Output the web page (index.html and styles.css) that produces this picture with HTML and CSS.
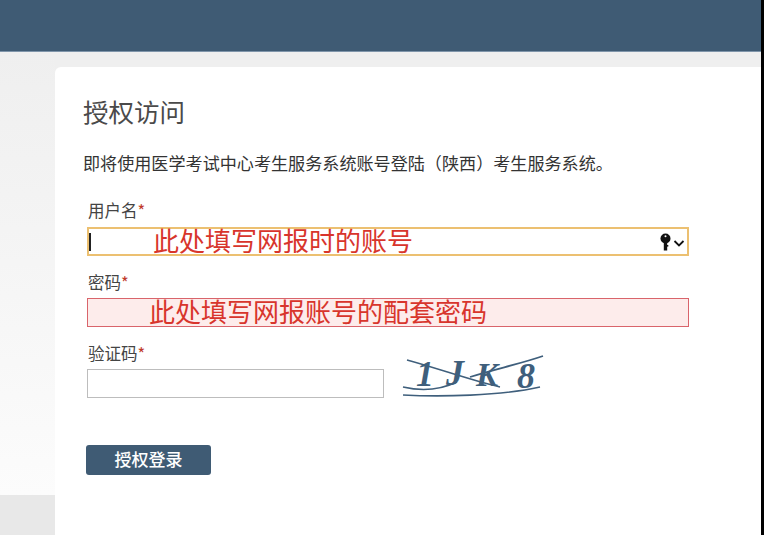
FILE: index.html
```html
<!DOCTYPE html>
<html lang="zh-CN">
<head>
    <meta charset="UTF-8">
    <title>授权访问</title>
    <link rel="stylesheet" href="styles.css">
</head>
<body>
    <div class="page">
        <div class="screen">
            <div class="topbar"></div>
            <div class="main">
                <div class="side">
                    <div class="side-top"></div>
                    <div class="side-bottom"></div>
                </div>
                <div class="card">
                    <h1 class="title">授权访问</h1>
                    <p class="desc">即将使用医学考试中心考生服务系统账号登陆（陕西）考生服务系统。</p>

                    <label class="label">用户名<span class="req">*</span></label>
                    <div class="field field-focus">
                        <span class="caret"></span>
                        <span class="hint hint-user">此处填写网报时的账号</span>
                        <svg class="key" width="26" height="18" viewBox="0 0 26 18">
                            <circle cx="5.5" cy="5.5" r="5" fill="#111"/>
                            <rect x="3.8" y="8" width="3.4" height="9.5" fill="#111"/>
                            <rect x="6.5" y="12" width="1.8" height="1.6" fill="#111"/>
                            <circle cx="5.5" cy="3.2" r="1" fill="#fff"/>
                            <path d="M14.5 8 L19 12.4 L23.5 8" fill="none" stroke="#111" stroke-width="1.8"/>
                        </svg>
                    </div>

                    <label class="label label-pass">密码<span class="req">*</span></label>
                    <div class="field field-error">
                        <span class="hint hint-pass">此处填写网报账号的配套密码</span>
                    </div>

                    <label class="label label-code">验证码<span class="req">*</span></label>
                    <div class="code-row">
                        <div class="field field-code"></div>
                        <svg class="captcha" width="146" height="48" viewBox="0 0 146 48">
                            <path d="M7 8 C40 17 70 28 100 35" fill="none" stroke="#3f5f7c" stroke-width="1.5"/>
                            <path d="M70 25 C95 17 120 12 143 4" fill="none" stroke="#3f5f7c" stroke-width="1.8"/>
                            <path d="M3 35 C20 39 40 38 57 30" fill="none" stroke="#3f5f7c" stroke-width="1.5"/>
                            <path d="M3 43 C40 45 100 44 140 35" fill="none" stroke="#3f5f7c" stroke-width="1.6"/>
                            <text class="captcha-text" x="16" y="34">1</text>
                            <text class="captcha-text" x="46" y="33">J</text>
                            <text class="captcha-text captcha-small" x="76" y="34">K</text>
                            <text class="captcha-text captcha-thin" x="117" y="36">8</text>
                        </svg>
                    </div>

                    <button class="btn">授权登录</button>
                </div>
            </div>
        </div>
        <div class="edge"></div>
    </div>
</body>
</html>
```

FILE: styles.css
```css
* {
    box-sizing: border-box;
}
body {
    margin: 0;
    font-family: "Noto Sans CJK SC", "Liberation Sans", sans-serif;
    color: #444;
    overflow: hidden;
}
.page {
    display: flex;
    height: 535px;
}
.screen {
    flex: 1;
    display: flex;
    flex-direction: column;
}
.edge {
    width: 3px;
    background-color: #000;
}
.topbar {
    height: 52px;
    background-color: #3f5b74;
    border-bottom: 1px solid #7f95aa;
}
.main {
    flex: 1;
    display: flex;
    background-color: #efefef;
}
.side {
    width: 55px;
    display: flex;
    flex-direction: column;
}
.side-top {
    height: 443px;
    background: linear-gradient(#efefef, #f4f4f4 40%, #fcfcfc);
}
.side-bottom {
    flex: 1;
    background-color: #e8e8e8;
}
.card {
    flex: 1;
    display: flex;
    flex-direction: column;
    align-items: flex-start;
    margin-top: 15px;
    padding: 26px 0 0 28px;
    background-color: #fff;
    border-top-left-radius: 6px;
}
.title {
    margin: 0;
    height: 36px;
    font-size: 25.5px;
    line-height: 36px;
    font-weight: 400;
    color: #4a4a4a;
}
.desc {
    margin: 22px 0 0 0;
    font-size: 17.1px;
    line-height: 24px;
    color: #333;
    white-space: nowrap;
}
.label {
    display: block;
    margin: 23px 0 0 5px;
    height: 24px;
    font-size: 16.5px;
    line-height: 24px;
    color: #444;
}
.label-pass {
    margin-top: 14px;
}
.label-code {
    margin-top: 14px;
}
.req {
    color: #c0392b;
}
.field {
    display: flex;
    align-items: center;
    width: 602px;
    height: 29px;
    margin-left: 4px;
    margin-top: 4px;
    border: 1px solid #b9b9b9;
    background-color: #fff;
}
.field-focus {
    margin-top: 5px;
    border: 2px solid #ecc071;
}
.field-error {
    border-color: #d9646b;
    background-color: #fdeceb;
}
.field-code {
    width: 297px;
    margin-top: 0;
    border-color: #bdbdbd;
}
.caret {
    width: 2px;
    height: 18px;
    background-color: #222;
}
.hint {
    padding-bottom: 4px;
    font-size: 26px;
    line-height: 27px;
    color: #d8352c;
    white-space: nowrap;
}
.hint-user {
    margin-left: 62px;
}
.hint-pass {
    margin-left: 61px;
}
.key {
    margin-left: auto;
    margin-right: 1px;
}
.code-row {
    display: flex;
    align-items: flex-start;
    margin-top: 4px;
}
.captcha {
    margin-left: 16px;
    margin-top: -17px;
}
.captcha-text {
    font-family: "Liberation Serif", serif;
    font-size: 36px;
    font-style: italic;
    font-weight: 700;
    fill: #3f5f7c;
}
.captcha-small {
    font-size: 33px;
}
.captcha-thin {
    font-size: 36px;
    font-weight: 700;
}
.btn {
    width: 125px;
    height: 30px;
    margin: 45px 0 0 3px;
    padding: 0 0 3px 0;
    border: none;
    border-radius: 3px;
    background-color: #3f5b74;
    color: #fff;
    font-family: inherit;
    font-size: 17px;
    font-weight: 500;
    line-height: 27px;
}
```
